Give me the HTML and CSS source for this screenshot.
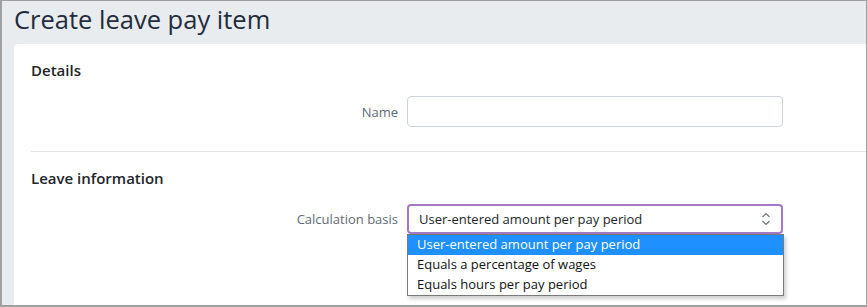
FILE: index.html
```html
<!DOCTYPE html>
<html lang="en">
<head>
    <meta charset="UTF-8">
    <meta name="viewport" content="width=device-width, initial-scale=1.0">
    <title>Create leave pay item</title>
    <link rel="stylesheet" href="styles.css">
</head>
<body>
    <h1 class="page-title">Create leave pay item</h1>
    <div class="card">
        <section class="section details">
            <h2 class="section-title">Details</h2>
            <div class="field">
                <label for="name">Name</label>
                <input type="text" id="name" class="text-input">
            </div>
        </section>
        <section class="section leave">
            <h2 class="section-title">Leave information</h2>
            <div class="field">
                <label>Calculation basis</label>
                <div class="select-wrap">
                    <div class="select">
                        <span>User-entered amount per pay period</span>
                        <svg class="chevrons" width="10" height="14" viewBox="0 0 10 14">
                            <path d="M1.5 5 L5 1.5 L8.5 5" fill="none" stroke="#6c757d" stroke-width="1.2"/>
                            <path d="M1.5 9 L5 12.5 L8.5 9" fill="none" stroke="#6c757d" stroke-width="1.2"/>
                        </svg>
                    </div>
                    <ul class="options">
                        <li class="selected">User-entered amount per pay period</li>
                        <li>Equals a percentage of wages</li>
                        <li>Equals hours per pay period</li>
                    </ul>
                </div>
            </div>
        </section>
    </div>
</body>
</html>
```

FILE: styles.css
```css
* {
    box-sizing: border-box;
}

body {
    margin: 0;
    height: 307px;
    overflow: hidden;
    display: flex;
    flex-direction: column;
    font-family: "Open Sans", "Noto Sans", sans-serif;
    color: #212529;
    background: #e9ecef;
    border-top: 1px solid #a0a0a0;
    border-left: 2px solid #a0a0a0;
    border-bottom: 2px solid #a0a0a0;
    border-right: 1px solid #a0a0a0;
    padding-left: 12px;
}

.page-title {
    margin: 0;
    flex: 0 0 43px;
    padding-top: 3px;
    font-size: 25.5px;
    font-weight: 400;
    line-height: 30px;
    color: #1f2d3d;
}

.card {
    flex: 1;
    overflow: hidden;
    background: #fff;
    border-top-left-radius: 4px;
}

.section {
    padding: 15px 0 0 17px;
}

.section-title {
    margin: 0;
    font-size: 15px;
    font-weight: 600;
    line-height: 22px;
    color: #212529;
}

.details {
    margin-left: 17px;
    padding-left: 0;
    padding-bottom: 24px;
    border-bottom: 1px solid #e3e6e9;
}

.field {
    display: flex;
    align-items: center;
    margin-top: 15px;
}

.field label {
    flex: 0 0 376px;
    padding-right: 9px;
    text-align: right;
    font-size: 13px;
    color: #5f6b76;
}

.text-input {
    width: 376px;
    height: 31px;
    border: 1px solid #ced4da;
    border-radius: 4px;
}

.leave {
    padding-top: 15px;
}

.leave .field {
    margin-top: 15px;
    align-items: flex-start;
}

.leave .field label {
    line-height: 30px;
}

.select-wrap {
    position: relative;
    width: 376px;
}

.select {
    display: flex;
    align-items: center;
    justify-content: space-between;
    height: 30px;
    padding: 0 10px;
    border: 2px solid #a478c4;
    border-radius: 4px;
    font-size: 13px;
    color: #212529;
}

.options {
    position: absolute;
    top: 30px;
    left: 0;
    width: 377px;
    margin: 0;
    padding: 0;
    list-style: none;
    background: #fff;
    border: 1px solid #7a7a7a;
    box-shadow: 2px 3px 4px rgba(0, 0, 0, 0.2);
    font-size: 13px;
}

.options li {
    height: 20px;
    line-height: 19px;
    padding-left: 9px;
    color: #111;
}

.options li.selected {
    background: #1e90ff;
    color: #fff;
}
```
